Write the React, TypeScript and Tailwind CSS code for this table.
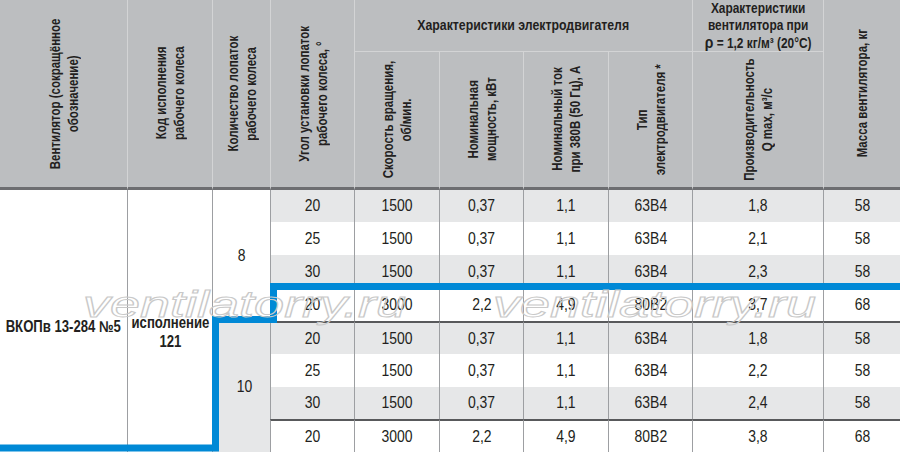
import React from 'react'

// ─── Data ─────────────────────────────────────────────────────────────────────

const rows = [
  ['20', '1500', '0,37', '1,1', '63В4', '1,8', '58'],
  ['25', '1500', '0,37', '1,1', '63В4', '2,1', '58'],
  ['30', '1500', '0,37', '1,1', '63В4', '2,3', '58'],
  ['20', '3000', '2,2', '4,9', '80В2', '3,7', '68'],
  ['20', '1500', '0,37', '1,1', '63В4', '1,8', '58'],
  ['25', '1500', '0,37', '1,1', '63В4', '2,2', '58'],
  ['30', '1500', '0,37', '1,1', '63В4', '2,4', '58'],
  ['20', '3000', '2,2', '4,9', '80В2', '3,8', '68'],
]

const rowStart = [
  'row-start-3',
  'row-start-4',
  'row-start-5',
  'row-start-6',
  'row-start-7',
  'row-start-8',
  'row-start-9',
  'row-start-10',
]

const colStart = [
  'col-start-4',
  'col-start-5',
  'col-start-6',
  'col-start-7',
  'col-start-8',
  'col-start-9',
  'col-start-10',
]

// ─── Header cells ─────────────────────────────────────────────────────────────

// rotated header text, squeezed along its line to mimic a condensed face
function VHead({ className, children }: { className: string; children: React.ReactNode }) {
  return (
    <div className={`flex items-center justify-center border-l border-[#d3d4d5] ${className}`}>
      <span className="[writing-mode:vertical-rl] rotate-180 scale-y-[0.82] whitespace-nowrap text-center text-[14px] font-bold leading-[18px] text-[#231f20]">
        {children}
      </span>
    </div>
  )
}

// horizontal condensed text
function N({ className = '', children }: { className?: string; children: React.ReactNode }) {
  return <span className={`inline-block scale-x-[0.82] whitespace-nowrap ${className}`}>{children}</span>
}

function Watermark({ className }: { className: string }) {
  return (
    <span
      className={`pointer-events-none absolute origin-left scale-x-[1.5] text-[36px] italic leading-none text-transparent [-webkit-text-stroke:1px_#c9c9c9] ${className}`}
    >
      ventilatorry.ru
    </span>
  )
}

// ─── Component ────────────────────────────────────────────────────────────────

export default function App() {
  return (
    <div className="relative h-[452px] w-[900px] overflow-hidden bg-white font-['Liberation_Sans',Arial,sans-serif] text-[#231f20]">
      <div className="grid grid-cols-[127px_85px_58px_84px_85px_84px_85px_84px_131px_77px] grid-rows-[52px_138px_32px_33px_34px_32px_33px_33px_32px_33px]">
        {/* header */}
        <VHead className="col-start-1 row-start-1 row-span-2 border-l-0 border-b-[3px] border-b-[#6d6e71] bg-[#bcbec0]">
          Вентилятор (сокращённое
          <br />
          обозначение)
        </VHead>
        <VHead className="col-start-2 row-start-1 row-span-2 border-b-[3px] border-b-[#6d6e71] bg-[#bcbec0]">
          Код исполнения
          <br />
          рабочего колеса
        </VHead>
        <VHead className="col-start-3 row-start-1 row-span-2 border-b-[3px] border-b-[#6d6e71] bg-[#bcbec0]">
          Количество лопаток
          <br />
          рабочего колеса
        </VHead>
        <VHead className="col-start-4 row-start-1 row-span-2 border-b-[3px] border-b-[#6d6e71] bg-[#bcbec0]">
          Угол установки лопаток
          <br />
          рабочего колеса, °
        </VHead>
        <div className="col-start-5 col-span-4 row-start-1 flex items-center justify-center border-b border-l border-[#d3d4d5] bg-[#bcbec0] text-[15px] font-bold">
          <N>Характеристики электродвигателя</N>
        </div>
        <div className="col-start-9 row-start-1 flex items-center justify-center border-b border-l border-[#d3d4d5] bg-[#bcbec0] text-center text-[14.5px] font-bold leading-[17px]">
          <N>
            Характеристики
            <br />
            вентилятора при
            <br />
            <span className="text-[17px]">ρ</span> = 1,2 кг/м³ (20°С)
          </N>
        </div>
        <VHead className="col-start-5 row-start-2 border-b-[3px] border-b-[#6d6e71] bg-[#bcbec0]">
          Скорость вращения,
          <br />
          об/мин.
        </VHead>
        <VHead className="col-start-6 row-start-2 border-b-[3px] border-b-[#6d6e71] bg-[#bcbec0]">
          Номинальная
          <br />
          мощность, кВт
        </VHead>
        <VHead className="col-start-7 row-start-2 border-b-[3px] border-b-[#6d6e71] bg-[#bcbec0]">
          Номинальный ток
          <br />
          при 380В (50 Гц), А
        </VHead>
        <VHead className="col-start-8 row-start-2 border-b-[3px] border-b-[#6d6e71] bg-[#bcbec0]">
          Тип
          <br />
          электродвигателя *
        </VHead>
        <VHead className="col-start-9 row-start-2 border-b-[3px] border-b-[#6d6e71] bg-[#bcbec0]">
          Производительность
          <br />
          Q max, м³/с
        </VHead>
        <VHead className="col-start-10 row-start-1 row-span-2 border-b-[3px] border-b-[#6d6e71] bg-[#bcbec0]">
          Масса вентилятора, кг
        </VHead>

        {/* left merged cells */}
        <div className="col-start-1 row-start-3 row-span-8 flex items-center justify-center pt-[12px] text-[16px] font-bold">
          <N>ВКОПв 13-284 №5</N>
        </div>
        <div className="col-start-2 row-start-3 row-span-8 flex items-center justify-center border-l border-[#9d9fa2] pt-[22px] text-center text-[16px] font-bold leading-[19px]">
          <N>
            исполнение
            <br />
            121
          </N>
        </div>
        <div className="col-start-3 row-start-3 row-span-4 flex items-center justify-center border-l border-[#9d9fa2] text-[17px]">
          <N>8</N>
        </div>
        <div className="col-start-3 row-start-7 row-span-4 flex items-center justify-center border-l border-[#9d9fa2] bg-[#e6e7e8] pl-[6px] text-[17px]">
          <N>10</N>
        </div>

        {/* data */}
        {rows.map((r, i) =>
          r.map((v, j) => (
            <div
              key={`${i}-${j}`}
              className={`${rowStart[i]} ${colStart[j]} flex items-center justify-center border-l border-[#9d9fa2] text-[17px] ${
                i % 2 === 0 ? 'bg-[#e6e7e8]' : 'bg-white'
              } ${i === 4 || i === 7 ? 'border-t-2 border-t-[#58595b]' : ''}`}
            >
              <N>{v}</N>
            </div>
          )),
        )}
      </div>

      {/* highlight outline */}
      <svg className="pointer-events-none absolute inset-0" width="900" height="452">
        <path
          d="M0 448 H215.5 V319.5 H273.5 V286.5 H900"
          fill="none"
          stroke="#0089d6"
          strokeWidth="7"
          strokeLinejoin="miter"
        />
      </svg>

      <Watermark className="left-[83px] top-[287px]" />
      <Watermark className="left-[493px] top-[287px]" />
    </div>
  )
}
